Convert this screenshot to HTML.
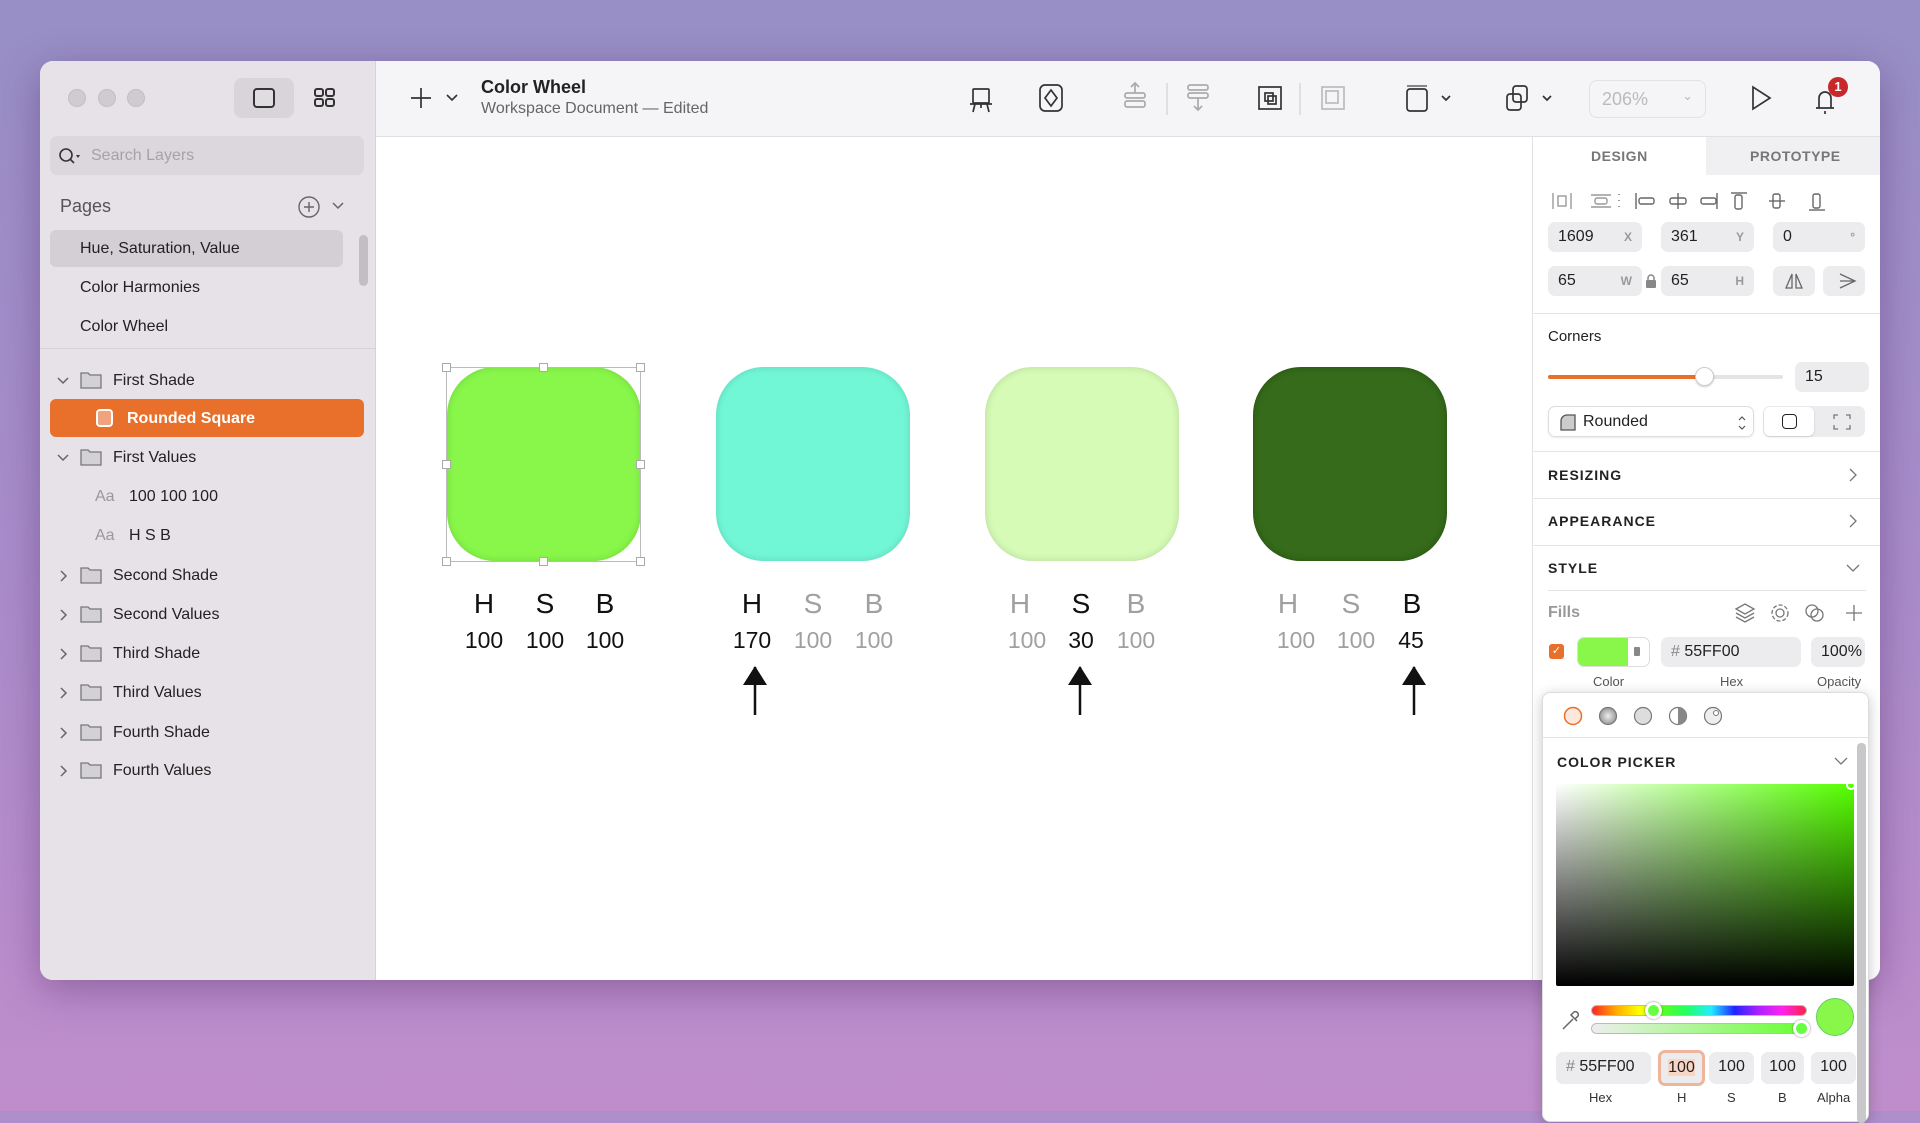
<!DOCTYPE html>
<html><head><meta charset="utf-8"><style>
*{box-sizing:border-box;margin:0;padding:0}
html{background:#b08dcb}
body{width:1920px;height:1111px;overflow:hidden;position:relative;font-family:"Liberation Sans",sans-serif;background:linear-gradient(180deg,#978fc6 0%,#a98ccb 50%,#c08dcb 100%)}
.a{position:absolute}
.win{left:40px;top:61px;width:1840px;height:919px;border-radius:13px;overflow:hidden;background:#fff;box-shadow:0 10px 40px rgba(60,20,80,.35)}
.side{left:0;top:0;width:336px;height:919px;background:#e6e2e7;border-right:1px solid #d6d3d8}
.tb{left:336px;top:0;right:0;height:76px;background:#f5f4f6;border-bottom:1px solid #e0dfe2}
.t{font-size:16px;color:#222;white-space:nowrap}
.dot{width:18px;height:18px;border-radius:50%;background:#cfcbcf;border:1px solid #c2bec3}
.hsb{font-size:28px;color:#111;text-align:center;width:40px;margin-left:-20px}
.num{font-size:23px;color:#111;text-align:center;width:50px;margin-left:-25px}
.g{color:#a0a0a0}
.sq{width:194px;height:194px;border-radius:48px}
.h{width:9px;height:9px;background:#fff;border:1px solid #aaa}
.fld{background:#ececee;border-radius:7px;height:30px;font-size:16px;color:#222;padding:6px 10px}
.lab{font-size:12px;color:#999;font-weight:bold;position:absolute;right:10px;top:8px}
.sec{font-size:14px;font-weight:bold;letter-spacing:1px;color:#222}
.hr{height:1px;background:#e4e3e6}
.sm{font-size:13px;color:#333;text-align:center}
</style></head><body>
<div class="a win">
 <div class="a side">
  <div class="a dot" style="left:28px;top:28px"></div>
  <div class="a dot" style="left:58px;top:28px"></div>
  <div class="a dot" style="left:87px;top:28px"></div>
  <div class="a" style="left:194px;top:17px;width:60px;height:40px;border-radius:8px;background:#d8d4d9"></div>
  <svg class="a" style="left:212px;top:26px" width="24" height="22"><rect x="2" y="2" width="20" height="18" rx="3" fill="#e0dde1" stroke="#333" stroke-width="2"/></svg>
  <svg class="a" style="left:273px;top:26px" width="24" height="22"><g fill="none" stroke="#333" stroke-width="2"><rect x="2" y="2" width="8" height="7" rx="2"/><rect x="13" y="2" width="8" height="7" rx="2"/><rect x="2" y="12" width="8" height="7" rx="2"/><rect x="13" y="12" width="8" height="7" rx="2"/></g></svg>
  <div class="a" style="left:10px;top:75px;width:314px;height:39px;border-radius:7px;background:#dbd7dc"></div>
  <svg class="a" style="left:18px;top:86px" width="24" height="18"><circle cx="8" cy="8" r="6" fill="none" stroke="#333" stroke-width="1.6"/><path d="M12 12l4 4" stroke="#333" stroke-width="1.6"/><path d="M18 8l4 0l-2 3z" fill="#333"/></svg>
  <div class="a t" style="left:51px;top:86px;color:#a5a2a8">Search Layers</div>
  <div class="a" style="left:20px;top:135px;font-size:18px;color:#555">Pages</div>
  <svg class="a" style="left:257px;top:134px" width="24" height="24"><circle cx="12" cy="12" r="10" fill="none" stroke="#666" stroke-width="1.4"/><path d="M12 7v10M7 12h10" stroke="#666" stroke-width="1.4"/></svg>
  <svg class="a" style="left:291px;top:140px" width="14" height="10"><path d="M2 2l5 5 5-5" fill="none" stroke="#666" stroke-width="1.5"/></svg>
  <div class="a" style="left:10px;top:169px;width:293px;height:37px;border-radius:6px;background:#d3cfd4"></div>
  <div class="a" style="left:319px;top:174px;width:9px;height:51px;border-radius:5px;background:#c2bfc4"></div>
  <div class="a t" style="left:40px;top:179px">Hue, Saturation, Value</div>
  <div class="a t" style="left:40px;top:218px">Color Harmonies</div>
  <div class="a t" style="left:40px;top:257px">Color Wheel</div>
  <div class="a hr" style="left:0;top:287px;width:336px;background:#d4d1d6"></div>
  <div class="a" style="left:10px;top:338px;width:314px;height:38px;border-radius:6px;background:#e8702a"></div>
  <div class="a" style="left:56px;top:348px;width:17px;height:18px;border-radius:4px;background:#f0a37d;border:2px solid #fff"></div>
  <div class="a t" style="left:87px;top:349px;color:#fff;font-weight:bold">Rounded Square</div>
  <svg class="a" style="left:0;top:0" width="140" height="760">
   <g fill="none" stroke="#666" stroke-width="1.5">
   <path d="M18 317l5 5 5-5"/><path d="M18 394l5 5 5-5"/>
   <path d="M21 510l5 5-5 5"/><path d="M21 549l5 5-5 5"/><path d="M21 588l5 5-5 5"/><path d="M21 627l5 5-5 5"/><path d="M21 667l5 5-5 5"/><path d="M21 705l5 5-5 5"/></g>
   <g fill="#d4d1d6" stroke="#777" stroke-width="1.3">
   <path d="M41 312h7l2 2h11v13h-20z"/><path d="M41 389h7l2 2h11v13h-20z"/><path d="M41 507h7l2 2h11v13h-20z"/><path d="M41 546h7l2 2h11v13h-20z"/><path d="M41 585h7l2 2h11v13h-20z"/><path d="M41 624h7l2 2h11v13h-20z"/><path d="M41 664h7l2 2h11v13h-20z"/><path d="M41 702h7l2 2h11v13h-20z"/></g></svg>
  <div class="a t" style="left:73px;top:311px">First Shade</div>
  <div class="a t" style="left:73px;top:388px">First Values</div>
  <div class="a t" style="left:55px;top:427px;color:#999">Aa</div><div class="a t" style="left:89px;top:427px">100 100 100</div>
  <div class="a t" style="left:55px;top:466px;color:#999">Aa</div><div class="a t" style="left:89px;top:466px">H S B</div>
  <div class="a t" style="left:73px;top:506px">Second Shade</div>
  <div class="a t" style="left:73px;top:545px">Second Values</div>
  <div class="a t" style="left:73px;top:584px">Third Shade</div>
  <div class="a t" style="left:73px;top:623px">Third Values</div>
  <div class="a t" style="left:73px;top:663px">Fourth Shade</div>
  <div class="a t" style="left:73px;top:701px">Fourth Values</div>
 </div>
 <div class="a tb">
  <div class="a" style="left:105px;top:16px;font-size:18px;font-weight:bold;color:#222">Color Wheel</div>
  <div class="a" style="left:105px;top:39px;font-size:16px;color:#666">Workspace Document — Edited</div>
  <svg class="a" style="left:0;top:0" width="1504" height="76"><g fill="none" stroke="#333" stroke-width="1.7">
   <path d="M35 37h20M45 27v20"/><path d="M71 34l5 5 5-5" stroke-width="1.6"/>
   <rect x="597" y="28" width="16" height="14" rx="1"/><path d="M594 43h22M599 43l-2 8M611 43l2 8M605 43v4"/>
   <rect x="664" y="24" width="22" height="26" rx="5"/><path d="M675 29l6 8-6 8-6-8z"/>
   <g stroke="#aaa"><rect x="749" y="40" width="20" height="6" rx="2"/><rect x="749" y="32" width="20" height="5" rx="2"/><path d="M759 32v-10M755 26l4-4 4 4"/>
   <path d="M791 22v32" stroke="#ddd"/>
   <rect x="812" y="24" width="20" height="5" rx="2"/><rect x="812" y="32" width="20" height="5" rx="2"/><path d="M822 37v12M818 45l4 4 4-4"/></g>
   <rect x="883" y="26" width="22" height="22"/><rect x="889" y="32" width="8" height="8"/><rect x="892" y="35" width="8" height="8"/>
   <path d="M924 22v32" stroke="#ddd"/>
   <g stroke="#bbb"><rect x="946" y="26" width="22" height="22"/><rect x="950" y="30" width="12" height="12"/></g>
   <rect x="1031" y="28" width="20" height="22" rx="3"/><path d="M1031 25h20" stroke="#777"/><path d="M1066 35l4 4 4-4"/>
   <rect x="1131" y="33" width="14" height="16" rx="3"/><rect x="1137" y="25" width="14" height="16" rx="3"/><path d="M1167 35l4 4 4-4"/>
   <path d="M1377 26v22l17-11z"/>
   <path d="M1440 47h18M1443 47v-10a6 6 0 0 1 12 0v10M1449 50v3"/></g></svg>
  <div class="a" style="left:1213px;top:19px;width:117px;height:38px;border:1px solid #e2e1e4;border-radius:8px;font-size:18px;color:#bbb;padding:8px 0 0 12px">206%<span style="position:absolute;right:12px;top:7px;font-size:13px">⌄</span></div>
  <div class="a" style="left:1452px;top:16px;width:20px;height:20px;border-radius:50%;background:#c8282a;color:#fff;font-size:13px;font-weight:bold;text-align:center;line-height:20px">1</div>
 </div>
 <!-- canvas -->
 <div class="a sq" style="left:407px;top:306px;background:#88f74a;box-shadow:inset 0 0 8px rgba(0,0,0,.15)"></div>
 <div class="a sq" style="left:676px;top:306px;background:#72f7d6;box-shadow:inset 0 0 8px rgba(0,0,0,.15)"></div>
 <div class="a sq" style="left:945px;top:306px;background:#d6fbb6;box-shadow:inset 0 0 8px rgba(0,0,0,.15)"></div>
 <div class="a sq" style="left:1213px;top:306px;background:#356b1a;box-shadow:inset 0 0 8px rgba(0,0,0,.25)"></div>
 <div class="a" style="left:406px;top:306px;width:195px;height:195px;border:1px solid #bbb"></div>
 <div class="a h" style="left:402px;top:302px"></div><div class="a h" style="left:499px;top:302px"></div><div class="a h" style="left:596px;top:302px"></div>
 <div class="a h" style="left:402px;top:399px"></div><div class="a h" style="left:596px;top:399px"></div>
 <div class="a h" style="left:402px;top:496px"></div><div class="a h" style="left:499px;top:496px"></div><div class="a h" style="left:596px;top:496px"></div>
 <div class="a hsb" style="left:444px;top:527px">H</div><div class="a hsb" style="left:505px;top:527px">S</div><div class="a hsb" style="left:565px;top:527px">B</div>
 <div class="a num" style="left:444px;top:566px">100</div><div class="a num" style="left:505px;top:566px">100</div><div class="a num" style="left:565px;top:566px">100</div>
 <div class="a hsb" style="left:712px;top:527px">H</div><div class="a hsb g" style="left:773px;top:527px">S</div><div class="a hsb g" style="left:834px;top:527px">B</div>
 <div class="a num" style="left:712px;top:566px">170</div><div class="a num g" style="left:773px;top:566px">100</div><div class="a num g" style="left:834px;top:566px">100</div>
 <div class="a hsb g" style="left:980px;top:527px">H</div><div class="a hsb" style="left:1041px;top:527px">S</div><div class="a hsb g" style="left:1096px;top:527px">B</div>
 <div class="a num g" style="left:987px;top:566px">100</div><div class="a num" style="left:1041px;top:566px">30</div><div class="a num g" style="left:1096px;top:566px">100</div>
 <div class="a hsb g" style="left:1248px;top:527px">H</div><div class="a hsb g" style="left:1311px;top:527px">S</div><div class="a hsb" style="left:1372px;top:527px">B</div>
 <div class="a num g" style="left:1256px;top:566px">100</div><div class="a num g" style="left:1316px;top:566px">100</div><div class="a num" style="left:1371px;top:566px">45</div>
 <svg class="a" style="left:0;top:600px" width="1500" height="60"><g fill="#111" stroke="#111" stroke-width="2.5"><path d="M715 6v48M1040 6v48M1374 6v48"/><path d="M703 24l12-19 12 19z" stroke="none"/><path d="M1028 24l12-19 12 19z" stroke="none"/><path d="M1362 24l12-19 12 19z" stroke="none"/></g></svg>
 <!-- right panel -->
 <div class="a" style="left:1492px;top:76px;width:348px;height:843px;background:#fff;border-left:1px solid #e2e1e4">
  <div class="a" style="left:173px;top:0;width:175px;height:38px;background:#f0eff1"></div>
  <div class="a" style="left:58px;top:11px;font-size:14px;font-weight:bold;letter-spacing:.5px;color:#777">DESIGN</div>
  <div class="a" style="left:217px;top:11px;font-size:14px;font-weight:bold;letter-spacing:.5px;color:#777">PROTOTYPE</div>
  <svg class="a" style="left:0;top:50px" width="348" height="28"><g fill="none" stroke="#999" stroke-width="1.4"><path d="M20 6v16M38 6v16"/><rect x="25" y="9" width="8" height="10"/><path d="M58 8h20M58 20h20"/><rect x="62" y="11" width="12" height="6" rx="2"/><path d="M86 7v1M86 13v1M86 19v1" stroke-width="2"/>
  <g stroke="#666"><path d="M103 6v16"/><rect x="106" y="11" width="15" height="6" rx="2"/><path d="M145 6v16"/><rect x="137" y="11" width="16" height="6" rx="2"/><path d="M184 6v16"/><rect x="168" y="11" width="15" height="6" rx="2"/>
  <path d="M198 6h16"/><rect x="202" y="8" width="7" height="14" rx="2"/><path d="M236 14h16"/><rect x="240" y="7" width="7" height="14" rx="2"/><path d="M276 23h16"/><rect x="280" y="7" width="7" height="14" rx="2"/></g></g></svg>
  <div class="a fld" style="left:15px;top:85px;width:94px">1609<span class="lab">X</span></div>
  <div class="a fld" style="left:128px;top:85px;width:93px">361<span class="lab">Y</span></div>
  <div class="a fld" style="left:240px;top:85px;width:92px">0<span class="lab">°</span></div>
  <div class="a fld" style="left:15px;top:129px;width:94px">65<span class="lab">W</span></div>
  <svg class="a" style="left:112px;top:137px" width="12" height="14"><rect x="1" y="6" width="10" height="8" rx="1" fill="#888"/><path d="M3 6v-2a3 3 0 0 1 6 0v2" fill="none" stroke="#888" stroke-width="1.5"/></svg>
  <div class="a fld" style="left:128px;top:129px;width:93px">65<span class="lab">H</span></div>
  <div class="a fld" style="left:240px;top:129px;width:42px"></div>
  <div class="a fld" style="left:290px;top:129px;width:42px"></div>
  <svg class="a" style="left:240px;top:129px" width="92" height="30"><g fill="none" stroke="#666" stroke-width="1.3"><path d="M19 8l-6 14h6zM23 8l6 14h-6z"/><path d="M67 8l15 7-15 7M67 15h15"/></g></svg>
  <div class="a hr" style="left:0;top:176px;width:348px"></div>
  <div class="a" style="left:15px;top:191px;font-size:15px;color:#222">Corners</div>
  <div class="a" style="left:15px;top:238px;width:235px;height:4px;border-radius:2px;background:#e4e4e6"></div>
  <div class="a" style="left:15px;top:238px;width:156px;height:4px;border-radius:2px;background:#e8702a"></div>
  <div class="a" style="left:162px;top:230px;width:19px;height:19px;border-radius:50%;background:#fff;border:1px solid #ccc;box-shadow:0 1px 2px rgba(0,0,0,.2)"></div>
  <div class="a fld" style="left:262px;top:225px;width:74px">15</div>
  <div class="a" style="left:15px;top:269px;width:206px;height:31px;border:1px solid #ddd;border-radius:7px;box-shadow:0 1px 2px rgba(0,0,0,.08);font-size:16px;color:#222;padding:6px 0 0 34px">Rounded</div>
  <svg class="a" style="left:26px;top:277px" width="200" height="18"><path d="M2 16v-9a6 6 0 0 1 6-6h8v15z" fill="#ccc" stroke="#555" stroke-width="1.3"/><path d="M180 6l3-3 3 3M180 12l3 3 3-3" fill="none" stroke="#555" stroke-width="1.2"/></svg>
  <div class="a" style="left:230px;top:269px;width:102px;height:31px;border-radius:7px;background:#ececee"></div>
  <div class="a" style="left:231px;top:270px;width:50px;height:29px;border-radius:6px;background:#fff;box-shadow:0 1px 2px rgba(0,0,0,.15)"></div>
  <div class="a" style="left:249px;top:277px;width:15px;height:15px;border:1.6px solid #222;border-radius:4px"></div>
  <svg class="a" style="left:300px;top:276px" width="18" height="18"><path d="M1 6v-4h4M13 2h4v4M17 12v4h-4M5 16h-4v-4" fill="none" stroke="#777" stroke-width="1.3"/></svg>
  <div class="a hr" style="left:0;top:314px;width:348px"></div>
  <div class="a sec" style="left:15px;top:330px">RESIZING</div>
  <div class="a hr" style="left:0;top:361px;width:348px"></div>
  <div class="a sec" style="left:15px;top:376px">APPEARANCE</div>
  <div class="a hr" style="left:0;top:408px;width:348px"></div>
  <div class="a sec" style="left:15px;top:423px">STYLE</div>
  <svg class="a" style="left:310px;top:324px" width="20" height="120"><g fill="none" stroke="#777" stroke-width="1.3"><path d="M7 8l6 6-6 6M7 54l6 6-6 6M4 104l6 6 6-6"/></g></svg>
  <div class="a hr" style="left:15px;top:453px;width:318px"></div>
  <div class="a" style="left:15px;top:467px;font-size:16px;font-weight:bold;color:#999">Fills</div>
  <svg class="a" style="left:200px;top:464px" width="140" height="24"><g fill="none" stroke="#777" stroke-width="1.3"><path d="M3 8l9-5 9 5-9 5zM3 12l9 5 9-5M3 16l9 5 9-5"/><circle cx="47" cy="12" r="4"/><circle cx="47" cy="12" r="8" stroke-dasharray="4 2"/><circle cx="79" cy="10" r="6"/><circle cx="84" cy="14" r="6"/><path d="M121 4v16M113 12h16"/></g></svg>
  <div class="a" style="left:16px;top:507px;width:15px;height:15px;border-radius:3px;background:#e8702a;color:#fff;font-size:11px;text-align:center;line-height:15px">✓</div>
  <div class="a" style="left:44px;top:500px;width:73px;height:30px;border-radius:7px;border:1px solid #ddd;background:#fff;overflow:hidden"><div style="width:50px;height:30px;background:#88f74a"></div><div style="position:absolute;left:56px;top:9px;width:6px;height:9px;background:#888;border-radius:1px"></div></div>
  <div class="a fld" style="left:128px;top:500px;width:140px"><span style="color:#888">#</span> 55FF00</div>
  <div class="a fld" style="left:278px;top:500px;width:54px;text-align:right;padding-right:6px">100%</div>
  <div class="a sm" style="left:60px;top:537px;color:#555">Color</div>
  <div class="a sm" style="left:187px;top:537px;color:#555">Hex</div>
  <div class="a sm" style="left:284px;top:537px;color:#555">Opacity</div>
 </div>
</div>
<!-- popover -->
<div class="a" style="left:1542px;top:692px;width:327px;height:430px;background:#fff;border-radius:8px;box-shadow:0 3px 14px rgba(0,0,0,.22);border:1px solid #ddd">
 <svg class="a" style="left:18px;top:11px" width="180" height="24"><circle cx="12" cy="12" r="8.5" fill="#fde8dd" stroke="#e8702a" stroke-width="1.5"/><defs><radialGradient id="r"><stop offset="0" stop-color="#eee"/><stop offset="1" stop-color="#999"/></radialGradient></defs><circle cx="47" cy="12" r="8.5" fill="url(#r)" stroke="#777" stroke-width="1.2"/><circle cx="82" cy="12" r="8.5" fill="#ddd" stroke="#777" stroke-width="1.2"/><circle cx="117" cy="12" r="8.5" fill="#fff" stroke="#777" stroke-width="1.2"/><path d="M117 3.5a8.5 8.5 0 0 1 0 17z" fill="#888"/><circle cx="152" cy="12" r="8.5" fill="#eee" stroke="#777" stroke-width="1.2"/><circle cx="155" cy="9" r="2.5" fill="#fff" stroke="#777"/></svg>
 <div class="a hr" style="left:0;top:44px;width:325px"></div>
 <div class="a sec" style="left:14px;top:61px;font-size:14px">COLOR PICKER</div>
 <svg class="a" style="left:290px;top:62px" width="16" height="12"><path d="M2 3l6 6 6-6" fill="none" stroke="#777" stroke-width="1.3"/></svg>
 <div class="a" style="left:314px;top:50px;width:9px;height:380px;border-radius:4px;background:#c8c8ca"></div>
 <div class="a" style="left:13px;top:91px;width:298px;height:202px;background:linear-gradient(to bottom,rgba(0,0,0,0),#000),linear-gradient(to right,#fff,#55ff00);border-radius:2px"></div>
 <div class="a" style="left:303px;top:87px;width:10px;height:10px;border-radius:50%;border:2px solid #fff"></div>
 <svg class="a" style="left:16px;top:316px" width="22" height="24"><path d="M4 20l10-10M12 6l6 6M15 3a3 3 0 0 1 4 4l-3 3-4-4z" fill="none" stroke="#666" stroke-width="1.5"/></svg>
 <div class="a" style="left:48px;top:312px;width:216px;height:11px;border-radius:6px;background:linear-gradient(to right,#f22,#fa0,#ff0,#5f2,#2f6,#2ef,#22f,#a2f,#f2e,#f24);border:1px solid #bbb"></div>
 <div class="a" style="left:102px;top:309px;width:17px;height:17px;border-radius:50%;background:#6f4;border:3px solid #fff;box-shadow:0 0 2px rgba(0,0,0,.5)"></div>
 <div class="a" style="left:48px;top:330px;width:216px;height:11px;border-radius:6px;background:linear-gradient(to right,#eee,#6f3);border:1px solid #bbb"></div>
 <div class="a" style="left:250px;top:327px;width:17px;height:17px;border-radius:50%;background:#6f4;border:3px solid #fff;box-shadow:0 0 2px rgba(0,0,0,.5)"></div>
 <div class="a" style="left:273px;top:305px;width:38px;height:38px;border-radius:50%;background:#88f74a;border:1px solid #6c6"></div>
 <div class="a fld" style="left:13px;top:359px;width:95px;height:32px"><span style="color:#888">#</span> 55FF00</div>
 <div class="a fld" style="left:115px;top:357px;width:47px;height:36px;border:3px solid #eeb59b;text-align:center;padding:6px 0"><span style="background:#f8d6c6">100</span></div>
 <div class="a fld" style="left:166px;top:359px;width:45px;height:32px;text-align:center;padding:6px 0">100</div>
 <div class="a fld" style="left:218px;top:359px;width:43px;height:32px;text-align:center;padding:6px 0">100</div>
 <div class="a fld" style="left:268px;top:359px;width:45px;height:32px;text-align:center;padding:6px 0">100</div>
 <div class="a sm" style="left:46px;top:397px">Hex</div>
 <div class="a sm" style="left:134px;top:397px">H</div>
 <div class="a sm" style="left:184px;top:397px">S</div>
 <div class="a sm" style="left:235px;top:397px">B</div>
 <div class="a sm" style="left:274px;top:397px">Alpha</div>
</div>
</body></html>
